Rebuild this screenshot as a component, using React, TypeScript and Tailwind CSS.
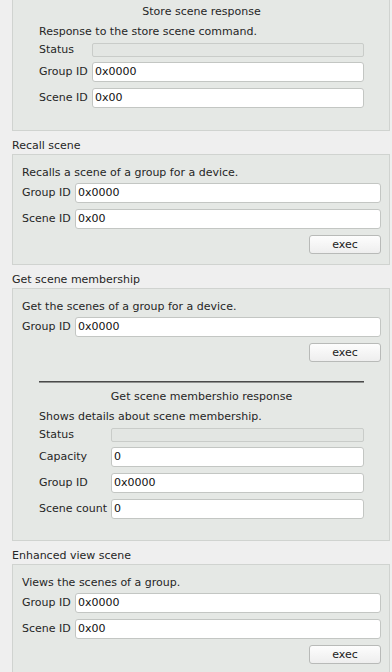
import React from "react";

type FieldProps = { label: string; value: string; wide?: boolean };

function Field({ label, value, wide }: FieldProps) {
  return (
    <div className="flex items-center h-[20px]">
      <span className={wide ? "w-[72px] shrink-0 leading-[16px]" : "w-[53px] shrink-0 leading-[16px]"}>{label}</span>
      <div className="flex-1 h-[20px] bg-white border border-[#c3c6c3] rounded-[3px] pl-[2px] leading-[18px] text-[#111]">
        {value}
      </div>
    </div>
  );
}

function StatusRow({ wide }: { wide?: boolean }) {
  return (
    <div className="flex items-center h-[18px] mt-[1px]">
      <span className={wide ? "w-[72px] shrink-0 leading-[16px]" : "w-[53px] shrink-0 leading-[16px]"}>Status</span>
      <div className="flex-1 h-[14px] bg-[#e3e6e3] border border-[#c9ccc9] rounded-[2px]" />
    </div>
  );
}

function ExecButton() {
  return (
    <div className="flex justify-end mt-[6px]">
      <div className="w-[72px] h-[19px] border border-[#b8bab8] rounded-[3px] bg-gradient-to-b from-[#fdfdfd] to-[#eeeeee] flex items-center justify-center leading-[16px] text-[#1a1a1a]">
        exec
      </div>
    </div>
  );
}

function SectionTitle({ text }: { text: string }) {
  return <div className="pt-[7px] leading-[16px] h-[23px]">{text}</div>;
}

function Panel({ children, noTop }: { children: React.ReactNode; noTop?: boolean }) {
  return (
    <div
      className={
        noTop
          ? "bg-[#e5e8e5] border border-t-0 border-[#d0d3d0] pt-[4px] pb-[10px] pl-[9px] pr-[8px]"
          : "bg-[#e5e8e5] border border-[#d0d3d0] pt-[10px] pb-[10px] pl-[9px] pr-[8px]"
      }
    >
      {children}
    </div>
  );
}

export default function App() {
  return (
    <div className="w-[392px] h-[672px] overflow-hidden bg-[#efefef] font-['DejaVu_Sans',sans-serif] text-[11px] text-[#262626] pl-[12px] pr-[2px]">
      {/* Store scene (scrolled) */}
      <Panel noTop>
        <div className="mx-[17px] pb-[12px]">
          <div className="text-center leading-[16px] h-[16px]">Store scene response</div>
          <div className="leading-[16px] mt-[4px]">Response to the store scene command.</div>
          <StatusRow />
          <div className="mt-[3px]">
            <Field label="Group ID" value="0x0000" />
          </div>
          <div className="mt-[6px]">
            <Field label="Scene ID" value="0x00" />
          </div>
        </div>
      </Panel>

      {/* Recall scene */}
      <SectionTitle text="Recall scene" />
      <Panel>
        <div className="leading-[16px]">Recalls a scene of a group for a device.</div>
        <div className="mt-[2px]">
          <Field label="Group ID" value="0x0000" />
        </div>
        <div className="mt-[6px]">
          <Field label="Scene ID" value="0x00" />
        </div>
        <ExecButton />
      </Panel>

      {/* Get scene membership */}
      <SectionTitle text="Get scene membership" />
      <Panel>
        <div className="leading-[16px]">Get the scenes of a group for a device.</div>
        <div className="mt-[2px]">
          <Field label="Group ID" value="0x0000" />
        </div>
        <ExecButton />
        <div className="mx-[17px] mt-[19px] pb-[11px]">
          <div className="h-[2px] border-t border-[#4a4a4a] border-b-[1px] border-b-[#8f918f]" />
          <div className="mt-[6px] text-center leading-[16px] h-[16px]">Get scene membershio response</div>
          <div className="leading-[16px] mt-[4px]">Shows details about scene membership.</div>
          <StatusRow wide />
          <div className="mt-[3px]">
            <Field label="Capacity" value="0" wide />
          </div>
          <div className="mt-[6px]">
            <Field label="Group ID" value="0x0000" wide />
          </div>
          <div className="mt-[6px]">
            <Field label="Scene count" value="0" wide />
          </div>
        </div>
      </Panel>

      {/* Enhanced view scene */}
      <SectionTitle text="Enhanced view scene" />
      <Panel>
        <div className="leading-[16px]">Views the scenes of a group.</div>
        <div className="mt-[2px]">
          <Field label="Group ID" value="0x0000" />
        </div>
        <div className="mt-[6px]">
          <Field label="Scene ID" value="0x00" />
        </div>
        <ExecButton />
      </Panel>
    </div>
  );
}
